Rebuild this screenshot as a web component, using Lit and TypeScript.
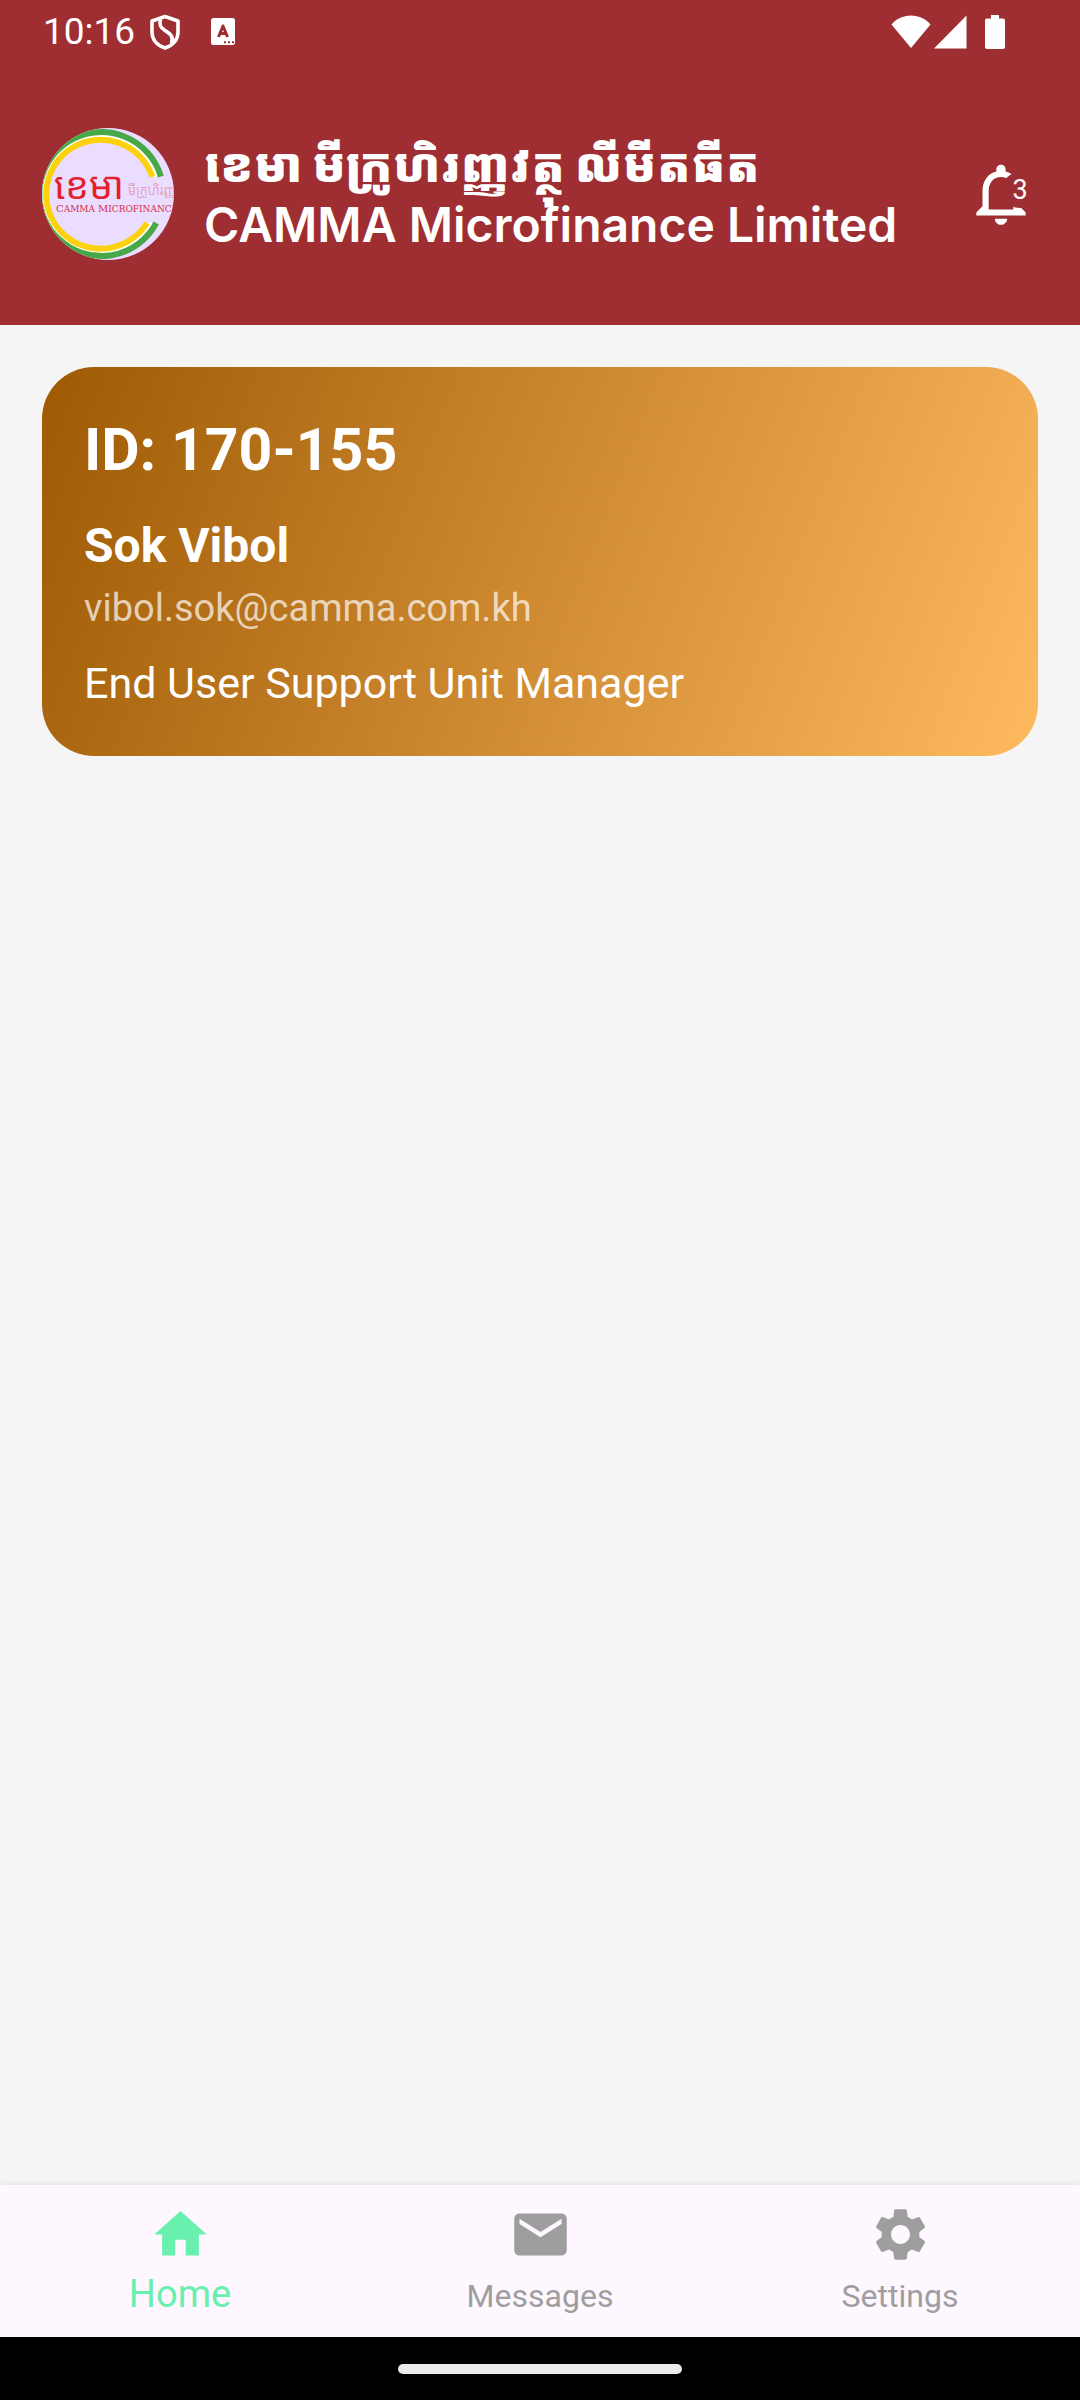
import { LitElement, html, css, svg } from "lit";
import { customElement, property, state } from "lit/decorators.js";
import { classMap } from "lit/directives/class-map.js";

const homeIcon = svg`<path d="M10 20v-6h4v6h5v-8h3L12 3 2 12h3v8z" />`;
const mailIcon = svg`<path d="M20 4H4c-1.1 0-2 .9-2 2v12c0 1.1.9 2 2 2h16c1.1 0 2-.9 2-2V6c0-1.1-.9-2-2-2zm0 4l-8 5-8-5V6l8 5 8-5v2z" />`;
const gearIcon = svg`<path d="M19.14 12.94c.04-.3.06-.61.06-.94 0-.32-.02-.64-.07-.94l2.03-1.58c.18-.14.23-.41.12-.61l-1.92-3.32c-.12-.22-.37-.29-.59-.22l-2.39.96c-.5-.38-1.03-.7-1.62-.94l-.36-2.54c-.04-.24-.24-.41-.48-.41h-3.84c-.24 0-.43.17-.47.41l-.36 2.54c-.59.24-1.13.57-1.62.94l-2.39-.96c-.22-.08-.47 0-.59.22L2.74 8.87c-.12.21-.08.47.12.61l2.03 1.58c-.05.3-.09.63-.09.94s.02.64.07.94l-2.03 1.58c-.18.14-.23.41-.12.61l1.92 3.32c.12.22.37.29.59.22l2.39-.96c.5.38 1.03.7 1.62.94l.36 2.54c.05.24.24.41.48.41h3.84c.24 0 .44-.17.47-.41l.36-2.54c.59-.24 1.13-.56 1.62-.94l2.39.96c.22.08.47 0 .59-.22l1.92-3.32c.12-.22.07-.47-.12-.61l-2.01-1.58zM12 15.6c-1.98 0-3.6-1.62-3.6-3.6s1.62-3.6 3.6-3.6 3.6 1.62 3.6 3.6-1.62 3.6-3.6 3.6z" />`;

@customElement("status-bar")
class StatusBar extends LitElement {
  static styles = css`
    :host {
      display: flex;
      align-items: center;
      justify-content: space-between;
      height: 63px;
      padding: 0 75px 0 43px;
      color: #fff;
    }
    .group {
      display: flex;
      align-items: center;
    }
    .clock {
      font-size: 37px;
      line-height: 44px;
      margin-right: 14px;
    }
    .shield {
      margin-right: 30px;
    }
    .cell {
      margin: 0 18px 0 2px;
    }
    svg {
      display: block;
    }
  `;

  render() {
    return html`
      <div class="group">
        <span class="clock">10:16</span>
        <svg class="shield" width="32" height="36" viewBox="0 0 32 36" fill="none" stroke="#fff" stroke-width="3.6" aria-hidden="true">
          <path d="M16 2.5L29 7v11c0 7.5-5 13.500-13 16C8 31.500 3 25.500 3 18V7z" stroke-linejoin="round" />
          <path d="M11.5 5c-1.500 6 0 8.500 4.500 11.500 5.500 3.500 9 6 6.500 13" />
        </svg>
        <svg width="24" height="27" viewBox="0 0 24 27" aria-hidden="true">
          <rect width="24" height="27" rx="2.5" fill="#fff" />
          <path d="M7.500 19L12 8l4.500 11M9 15.500h6" fill="none" stroke="#9e2e32" stroke-width="3" stroke-linejoin="round" />
          <path d="M13 23.200h2v2h-2zM17 23.200h2v2h-2zM21 23.200h2v2h-2z" fill="#9e2e32" />
        </svg>
      </div>
      <div class="group">
        <svg width="40" height="34" viewBox="0 0 40 34" fill="#fff" aria-hidden="true">
          <path d="M20 33L.5 9.500C5 4 12 .5 20 .5S35 4 39.500 9.500z" />
        </svg>
        <svg class="cell" width="34" height="34" viewBox="0 0 34 34" fill="#fff" aria-hidden="true">
          <path d="M1 33.500L33.500 .5v33z" />
        </svg>
        <svg width="20" height="34" viewBox="0 0 20 34" fill="#fff" aria-hidden="true">
          <path d="M6 0h8v3.500h4a2 2 0 0 1 2 2V32a2 2 0 0 1-2 2H2a2 2 0 0 1-2-2V5.500a2 2 0 0 1 2-2h4z" />
        </svg>
      </div>
    `;
  }
}

@customElement("company-logo")
class CompanyLogo extends LitElement {
  static styles = css`
    :host {
      display: block;
      flex: none;
    }
    svg {
      display: block;
    }
    .khmer {
      font: 400 38px "Noto Sans Khmer", "Khmer OS", sans-serif;
    }
    .khmer-small {
      font: 300 13px "Noto Sans Khmer", "Khmer OS", sans-serif;
    }
    .latin {
      font: 9px "DejaVu Serif", serif;
    }
    .initial {
      font-size: 10px;
    }
  `;

  render() {
    return html`
      <svg width="132" height="132" viewBox="0 0 132 132" role="img" aria-label="CAMMA Microfinance">
        <defs>
          <clipPath id="disc"><circle cx="66" cy="66" r="66" /></clipPath>
        </defs>
        <g clip-path="url(#disc)" fill="none">
          <rect width="132" height="132" fill="#eaddff" />
          <path d="M114.500 48.700A58 58 0 1 0 109.500 95" stroke="#fff" stroke-width="4" />
          <path d="M118.900 48.700A62 62 0 1 0 114.200 95" stroke="#47a847" stroke-width="6" />
          <path d="M110.300 48.700A54.500 54.500 0 1 0 105 95" stroke="#fcd20e" stroke-width="6" />
          <text class="khmer" x="12" y="71" fill="#e3202c">ខេមា</text>
          <text class="khmer-small" x="86" y="67" fill="#e88aa0">មីក្រូហិរញ្ញវត្ថុ</text>
          <text class="latin" x="14" y="84" fill="#d92d40"><tspan class="initial">C</tspan>AMMA <tspan class="initial">M</tspan>ICROFINANCE</text>
        </g>
      </svg>
    `;
  }
}

@customElement("app-header")
class AppHeader extends LitElement {
  @property({ type: Number }) unread = 3;

  static styles = css`
    :host {
      display: flex;
      align-items: center;
      gap: 30px;
      padding: 65px 42px;
      color: #fff;
    }
    .titles {
      flex: 1;
      min-width: 0;
      margin: 0;
      padding-top: 2px;
      font-weight: 600;
      font-size: 48px;
      line-height: 60px;
      font-family: Inter, "Noto Sans Khmer", "Khmer OS", sans-serif;
      white-space: nowrap;
    }
    .khmer,
    .latin {
      display: block;
    }
    .khmer {
      font-weight: 900;
    }
    .bell {
      position: relative;
      flex: none;
      padding: 0;
      border: 0;
      background: none;
      color: inherit;
      font: inherit;
      cursor: pointer;
    }
    .bell svg {
      display: block;
    }
    .badge {
      position: absolute;
      top: 15px;
      right: 0;
      width: 36px;
      height: 36px;
      border-radius: 50%;
      background: #9e2e32;
      font-size: 27px;
      line-height: 36px;
      text-align: center;
    }
  `;

  render() {
    return html`
      <company-logo></company-logo>
      <h1 class="titles">
        <span class="khmer" lang="km">ខេមា មីក្រូហិរញ្ញវត្ថុ លីមីតធីត</span>
        <span class="latin">CAMMA Microfinance Limited</span>
      </h1>
      <button class="bell" type="button" aria-label="Notifications, ${this.unread} unread">
        <svg width="74" height="74" viewBox="0 0 24 24" fill="#fff" aria-hidden="true">
          <path d="M12 22c1.100 0 2-.9 2-2h-4c0 1.100.9 2 2 2zm6-6v-5c0-3.070-1.630-5.640-4.500-6.320V4c0-.83-.67-1.500-1.500-1.500s-1.500.67-1.500 1.500v.68C7.640 5.360 6 7.920 6 11v5l-2 2v1h16v-1l-2-2zm-2 1H8v-6c0-2.480 1.510-4.500 4-4.500s4 2.020 4 4.500v6z" />
        </svg>
        <span class="badge">${this.unread}</span>
      </button>
    `;
  }
}

@customElement("profile-card")
class ProfileCard extends LitElement {
  static styles = css`
    :host {
      display: block;
      padding: 49px 42px 48px;
      border-radius: 52px;
      background: linear-gradient(111deg, #9e5a03, #ffba60);
      color: #fff;
    }
    h2,
    p {
      margin: 0;
    }
    .id {
      font-size: 59px;
      line-height: 68px;
      font-weight: 700;
    }
    .name {
      margin-top: 34px;
      font-size: 48px;
      line-height: 56px;
      font-weight: 700;
    }
    .email {
      margin-top: 12px;
      font-size: 38px;
      line-height: 44px;
      color: rgba(255, 255, 255, 0.7);
    }
    .role {
      margin-top: 28px;
      font-size: 43px;
      line-height: 50px;
    }
  `;

  render() {
    return html`
      <h2 class="id">ID: 170-155</h2>
      <p class="name">Sok Vibol</p>
      <p class="email">vibol.sok@camma.com.kh</p>
      <p class="role">End User Support Unit Manager</p>
    `;
  }
}

@customElement("bottom-nav")
class BottomNav extends LitElement {
  @state() private current = "Home";

  private tabs = [
    { label: "Home", icon: homeIcon },
    { label: "Messages", icon: mailIcon },
    { label: "Settings", icon: gearIcon },
  ];

  static styles = css`
    :host {
      display: block;
      background: #fef7ff;
      box-shadow: 0 -1px 6px rgba(0, 0, 0, 0.08);
    }
    .tabs {
      display: grid;
      grid-template-columns: repeat(3, 1fr);
    }
    .tab {
      display: flex;
      flex-direction: column;
      align-items: center;
      justify-content: flex-start;
      gap: 4px;
      padding: 18px 0 15px;
      border: 0;
      background: none;
      color: #9e9e9e;
      font-family: inherit;
      font-size: 32px;
      line-height: 52px;
      cursor: pointer;
    }
    .selected {
      color: #69f0ae;
      font-size: 38px;
      line-height: 48px;
    }
    svg {
      display: block;
      fill: currentColor;
    }
  `;

  render() {
    return html`
      <nav class="tabs" aria-label="Main">
        ${this.tabs.map(
          (tab) => html`
            <button
              type="button"
              class=${classMap({ tab: true, selected: tab.label === this.current })}
              aria-current=${tab.label === this.current ? "page" : "false"}
              @click=${() => (this.current = tab.label)}
            >
              <svg width="63" height="63" viewBox="0 0 24 24" aria-hidden="true">${tab.icon}</svg>
              <span>${tab.label}</span>
            </button>
          `,
        )}
      </nav>
    `;
  }
}

@customElement("app-root")
class AppRoot extends LitElement {
  static styles = css`
    :host {
      display: flex;
      flex-direction: column;
      min-height: 100vh;
      background: #f5f5f5;
      font-family: Roboto, "Liberation Sans", sans-serif;
    }
    .top {
      background: #9e2e32;
    }
    .content {
      flex: 1;
      padding: 42px;
    }
    .gesture {
      display: flex;
      justify-content: center;
      align-items: center;
      height: 63px;
      background: #000;
    }
    .pill {
      width: 284px;
      height: 10px;
      border-radius: 5px;
      background: #ebebeb;
    }
  `;

  render() {
    return html`
      <header class="top">
        <status-bar></status-bar>
        <app-header></app-header>
      </header>
      <main class="content">
        <profile-card></profile-card>
      </main>
      <bottom-nav></bottom-nav>
      <div class="gesture"><div class="pill"></div></div>
    `;
  }
}
